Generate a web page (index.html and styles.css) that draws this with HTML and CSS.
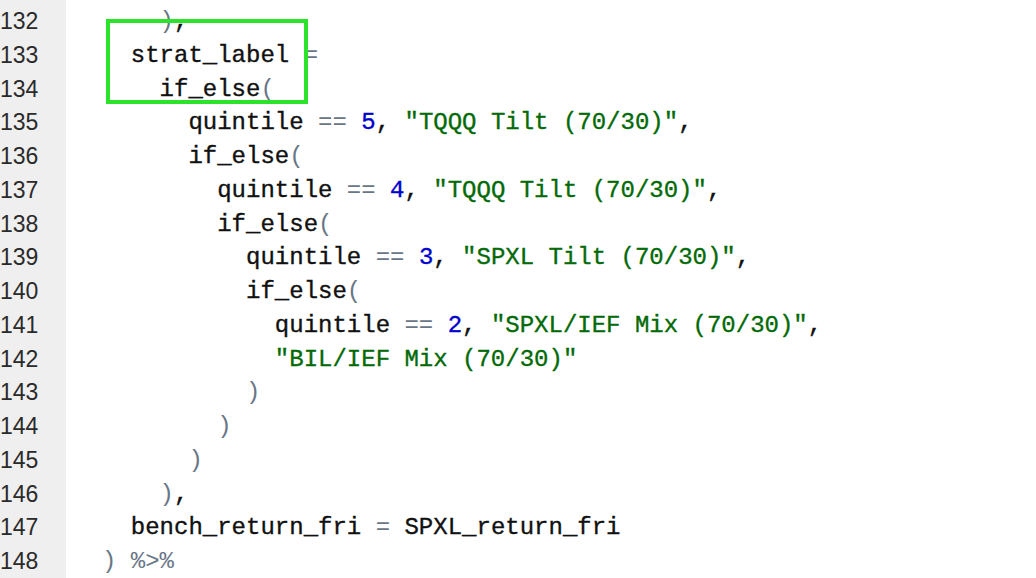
FILE: index.html
```html
<!DOCTYPE html>
<html>
<head>
<meta charset="utf-8">
<link rel="stylesheet" href="styles.css">
</head>
<body>
<div class="editor">
  <div class="gutter">
    <div class="ln"></div>
    <div class="ln">132</div>
    <div class="ln">133</div>
    <div class="ln">134</div>
    <div class="ln">135</div>
    <div class="ln">136</div>
    <div class="ln">137</div>
    <div class="ln">138</div>
    <div class="ln">139</div>
    <div class="ln">140</div>
    <div class="ln">141</div>
    <div class="ln">142</div>
    <div class="ln">143</div>
    <div class="ln">144</div>
    <div class="ln">145</div>
    <div class="ln">146</div>
    <div class="ln">147</div>
    <div class="ln">148</div>
  </div>
  <div class="code">
    <div class="line"></div>
    <div class="line">    <span class="op">)</span>,</div>
    <div class="line">  strat_label <span class="op">=</span></div>
    <div class="line">    if_else<span class="op">(</span></div>
    <div class="line">      quintile <span class="op">==</span> <span class="num">5</span>, <span class="str">"TQQQ Tilt (70/30)"</span>,</div>
    <div class="line">      if_else<span class="op">(</span></div>
    <div class="line">        quintile <span class="op">==</span> <span class="num">4</span>, <span class="str">"TQQQ Tilt (70/30)"</span>,</div>
    <div class="line">        if_else<span class="op">(</span></div>
    <div class="line">          quintile <span class="op">==</span> <span class="num">3</span>, <span class="str">"SPXL Tilt (70/30)"</span>,</div>
    <div class="line">          if_else<span class="op">(</span></div>
    <div class="line">            quintile <span class="op">==</span> <span class="num">2</span>, <span class="str">"SPXL/IEF Mix (70/30)"</span>,</div>
    <div class="line">            <span class="str">"BIL/IEF Mix (70/30)"</span></div>
    <div class="line">          <span class="op">)</span></div>
    <div class="line">        <span class="op">)</span></div>
    <div class="line">      <span class="op">)</span></div>
    <div class="line">    <span class="op">)</span>,</div>
    <div class="line">  bench_return_fri <span class="op">=</span> SPXL_return_fri</div>
    <div class="line"><span class="op">)</span> <span class="op">%&gt;%</span></div>
  </div>
  <div class="highlight"></div>
</div>
</body>
</html>
```

FILE: styles.css
```css
html, body {
  margin: 0;
  padding: 0;
  background: #ffffff;
}

.editor {
  position: relative;
  display: flex;
  width: 1036px;
  height: 578px;
  overflow: hidden;
}

.gutter {
  width: 66px;
  flex: 0 0 66px;
  box-sizing: border-box;
  padding-right: 28px;
  background: #efefef;
  margin-top: -28.75px;
  padding-bottom: 40px;
}

.ln {
  height: 33.75px;
  line-height: 33.75px;
  text-align: right;
  font-family: "Liberation Sans", Arial, sans-serif;
  font-size: 23px;
  color: #2a2a2a;
}

.code {
  flex: 1;
  padding-left: 36px;
  margin-top: -28.75px;
}

.line {
  height: 33.75px;
  line-height: 33.75px;
  white-space: pre;
  font-family: "Liberation Mono", monospace;
  font-size: 24px;
  color: #111111;
  -webkit-text-stroke: 0.35px #111111;
}

.op {
  color: #687687;
  -webkit-text-stroke: 0;
}

.num {
  color: #0000cd;
  -webkit-text-stroke: 0.35px #0000cd;
}

.str {
  color: #036a07;
  -webkit-text-stroke: 0.35px #036a07;
}

.highlight {
  position: absolute;
  left: 106px;
  top: 19px;
  width: 202px;
  height: 85px;
  box-sizing: border-box;
  border: 4px solid #2be32b;
}
```
